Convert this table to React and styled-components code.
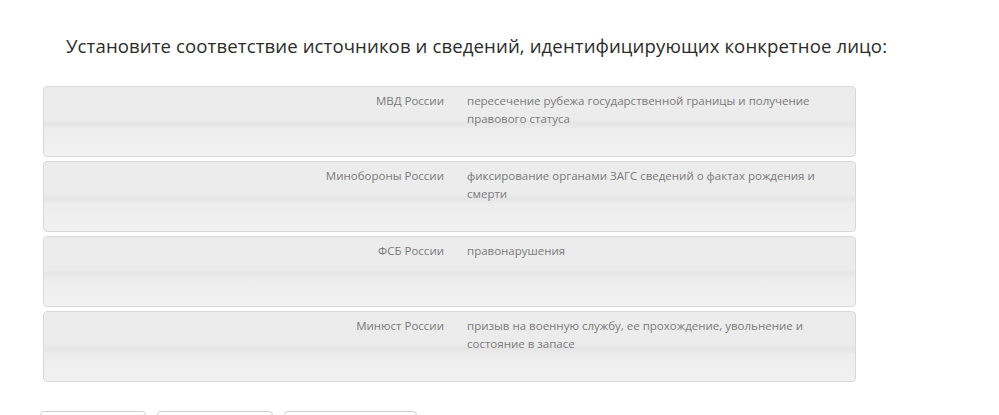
import React from "react";
import styled, { createGlobalStyle } from "styled-components";

const Global = createGlobalStyle`
  html, body { margin: 0; padding: 0; background: #fff; }
  body { font-family: "Open Sans", "Liberation Sans", sans-serif; overflow: hidden; }
`;

const Page = styled.div`
  width: 999px;
  height: 415px;
  overflow: hidden;
  padding: 33px 0 0 0;
  box-sizing: border-box;
`;

const Title = styled.h2`
  margin: 0 0 27px 66px;
  font-family: "Open Sans", sans-serif;
  font-weight: 400;
  font-size: 18.6px;
  line-height: 26px;
  color: #2b2b2b;
  letter-spacing: 0.1px;
`;

const List = styled.div`
  margin-left: 43px;
  width: 813px;
  display: flex;
  flex-direction: column;
  gap: 4px;
`;

const Card = styled.div`
  box-sizing: border-box;
  height: 71px;
  border: 1px solid #d9d9d9;
  border-radius: 4px;
  background: linear-gradient(
    to bottom,
    #ececec 0%,
    #ececec 46%,
    #e5e5e5 53%,
    #ededed 61%,
    #f1f1f1 100%
  );
  display: grid;
  grid-template-columns: 1fr 388px;
  column-gap: 23px;
  padding-top: 4.5px;
  font-size: 11.5px;
  line-height: 18px;
  color: #7a7a7a;
`;

const Label = styled.div`
  text-align: right;
`;

const Desc = styled.div`
  padding-right: 40px;
`;

const Buttons = styled.div`
  display: flex;
  gap: 11px;
  margin: 29px 0 0 40px;
`;

const Btn = styled.div`
  width: ${(p) => p.w}px;
  height: 30px;
  border: 1px solid #cfcfcf;
  border-radius: 4px;
  box-sizing: border-box;
  background: #fff;
`;

const rows = [
  ["МВД России", "пересечение рубежа государственной границы и получение правового статуса"],
  ["Минобороны России", "фиксирование органами ЗАГС сведений о фактах рождения и смерти"],
  ["ФСБ России", "правонарушения"],
  ["Минюст России", "призыв на военную службу, ее прохождение, увольнение и состояние в запасе"],
];

export default function App() {
  return (
    <Page>
      <Global />
      <Title>Установите соответствие источников и сведений, идентифицирующих конкретное лицо:</Title>
      <List>
        {rows.map(([l, d]) => (
          <Card key={l}>
            <Label>{l}</Label>
            <Desc>{d}</Desc>
          </Card>
        ))}
      </List>
      <Buttons>
        <Btn w={106} />
        <Btn w={116} />
        <Btn w={133} />
      </Buttons>
    </Page>
  );
}
